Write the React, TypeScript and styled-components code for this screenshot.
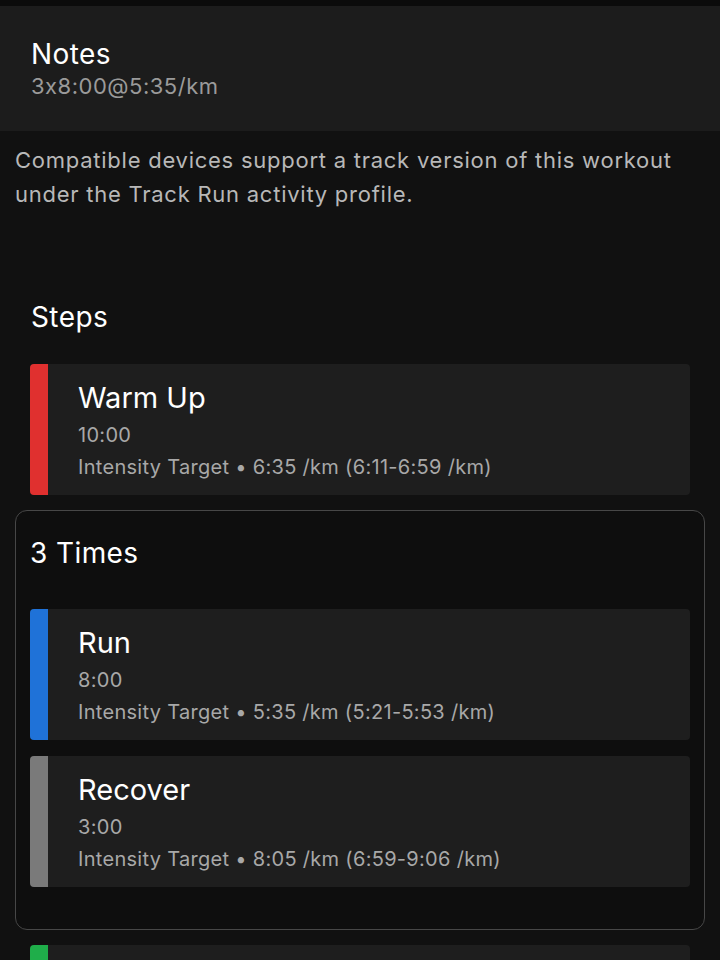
import styled, { createGlobalStyle } from "styled-components";

interface Step {
  name: string;
  duration: string;
  target: string;
  color: string;
}

const warmUp: Step = {
  name: "Warm Up",
  duration: "10:00",
  target: "6:35 /km (6:11-6:59 /km)",
  color: "#e0302f",
};

const repeatSteps: Step[] = [
  { name: "Run", duration: "8:00", target: "5:35 /km (5:21-5:53 /km)", color: "#1f72d8" },
  { name: "Recover", duration: "3:00", target: "8:05 /km (6:59-9:06 /km)", color: "#7a7a7a" },
];

const coolDown: Step = {
  name: "Cool Down",
  duration: "10:00",
  target: "6:35 /km (6:11-6:59 /km)",
  color: "#1fae4a",
};

const StepCard = ({ step }: { step: Step }) => (
  <Card>
    <ColorBar color={step.color} />
    <CardBody>
      <StepName>{step.name}</StepName>
      <StepMeta>{step.duration}</StepMeta>
      <StepMeta>Intensity Target • {step.target}</StepMeta>
    </CardBody>
  </Card>
);

const App = () => {
  return (
    <>
      <GlobalStyle />
      <Page>
        <TopStrip />
        <NotesPanel>
          <NotesTitle>Notes</NotesTitle>
          <NotesText>3x8:00@5:35/km</NotesText>
        </NotesPanel>
        <Info>
          Compatible devices support a track version of this workout under the Track Run activity
          profile.
        </Info>
        <SectionTitle>Steps</SectionTitle>
        <StepList>
          <StepCard step={warmUp} />
          <RepeatBox>
            <RepeatTitle>3 Times</RepeatTitle>
            <RepeatList>
              {repeatSteps.map((s) => (
                <StepCard key={s.name} step={s} />
              ))}
            </RepeatList>
          </RepeatBox>
          <StepCard step={coolDown} />
        </StepList>
      </Page>
    </>
  );
};

export default App;

const GlobalStyle = createGlobalStyle`
  html, body {
    margin: 0;
    padding: 0;
    background: #111111;
  }
  body {
    font-family: Inter, "Noto Sans", sans-serif;
    font-feature-settings: "calt" 0;
    color: #ffffff;
  }
`;

const Page = styled.div`
  width: 720px;
  height: 960px;
  overflow: hidden;
  background: #111111;
`;

const TopStrip = styled.div`
  height: 6px;
  background: #0b0b0b;
`;

const NotesPanel = styled.div`
  background: #1c1c1c;
  padding: 31px 31px 29px;
  height: 125px;
  box-sizing: border-box;
`;

const NotesTitle = styled.div`
  font-size: 28px;
  line-height: 34px;
  letter-spacing: 0.4px;
  color: #ffffff;
`;

const NotesText = styled.div`
  font-size: 22px;
  line-height: 30px;
  letter-spacing: 0.5px;
  color: #9a9a9a;
`;

const Info = styled.div`
  margin-top: 12px;
  padding: 0 15px;
  font-size: 22px;
  line-height: 34px;
  letter-spacing: 0.75px;
  color: #b8b8b8;
`;

const SectionTitle = styled.div`
  margin-top: 89px;
  padding: 0 31px;
  font-size: 28px;
  line-height: 34px;
  letter-spacing: 0.4px;
`;

const StepList = styled.div`
  margin-top: 30px;
  display: flex;
  flex-direction: column;
  gap: 15px;
  padding: 0 30px;
`;

const Card = styled.div`
  display: flex;
  height: 131px;
  background: #1e1e1e;
  border-radius: 4px;
  overflow: hidden;
`;

const ColorBar = styled.div<{ color: string }>`
  width: 18px;
  flex-shrink: 0;
  background: ${({ color }) => color};
`;

const CardBody = styled.div`
  padding: 16px 0 0 30px;
  display: flex;
  flex-direction: column;
`;

const StepName = styled.div`
  font-size: 29px;
  line-height: 36px;
  margin-bottom: 5px;
  color: #ffffff;
`;

const StepMeta = styled.div`
  font-size: 20px;
  line-height: 28px;
  margin-bottom: 4px;
  letter-spacing: 0.3px;
  color: #a8a8a8;
`;

const RepeatBox = styled.div`
  margin: 0 -15px;
  border: 1px solid #474747;
  border-radius: 12px;
  background: #0e0e0e;
  padding: 25px 14px 43px;
  height: 420px;
  box-sizing: border-box;
`;

const RepeatTitle = styled.div`
  font-size: 28px;
  line-height: 34px;
  letter-spacing: 0.4px;
`;

const RepeatList = styled.div`
  margin-top: 39px;
  display: flex;
  flex-direction: column;
  gap: 16px;
`;
